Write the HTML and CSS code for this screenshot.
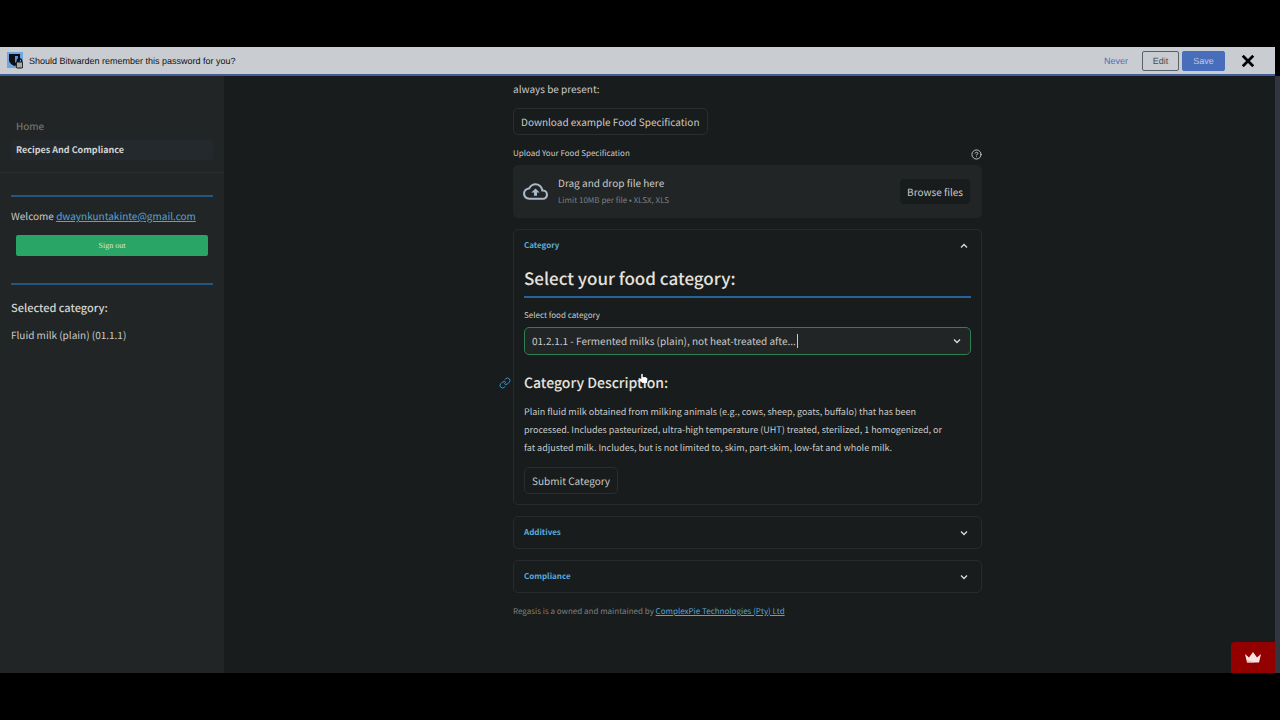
FILE: index.html
```html
<!DOCTYPE html>
<html lang="en">
<head>
<meta charset="utf-8">
<meta name="viewport" content="width=device-width, initial-scale=1">
<title>Regasis - Recipes And Compliance</title>
<link rel="stylesheet" href="styles.css">
</head>
<body>
<div class="frame">
  <header class="notice">
    <svg class="notice-logo" viewBox="0 0 16 17" aria-hidden="true">
      <rect width="16" height="16" fill="#6ea6e0"/>
      <path d="M2 2h11v6c0 3-3 5-5.500 6C4.500 13 2 10.500 2 8z" fill="#0b1018"/>
      <path d="M8 4h3v4.500L8 11z" fill="#5b91cc"/>
      <path d="M10.300 10V8.800a2.200 2.200 0 0 1 4.400 0V10" fill="none" stroke="#101010" stroke-width="1.300"/>
      <rect x="9.300" y="10" width="6.400" height="6" rx="1" fill="#a9a9a5" stroke="#111" stroke-width="1"/>
    </svg>
    <span class="notice-text">Should Bitwarden remember this password for you?</span>
    <button class="notice-link" type="button">Never</button>
    <button class="notice-btn" type="button">Edit</button>
    <button class="notice-btn notice-save" type="button">Save</button>
    <button class="notice-close" type="button" aria-label="Close">
      <svg viewBox="0 0 12 12"><path d="M1.500 1.500l9 9M10.500 1.500l-9 9" stroke="#000" stroke-width="2.400" fill="none"/></svg>
    </button>
  </header>

  <div class="app">
    <aside class="sidebar">
      <nav class="nav">
        <a class="nav-item" href="#">Home</a>
        <a class="nav-item nav-active" href="#">Recipes And Compliance</a>
      </nav>
      <div class="side-content">
        <hr class="rule">
        <p class="welcome">Welcome <a class="link" href="mailto:dwaynkuntakinte@gmail.com">dwaynkuntakinte@gmail.com</a></p>
        <button class="signout" type="button">Sign out</button>
        <hr class="rule">
        <h2 class="side-title">Selected category:</h2>
        <p class="side-text">Fluid milk (plain) (01.1.1)</p>
      </div>
    </aside>

    <main class="main">
      <div class="column">
        <p class="text">always be present:</p>
        <button class="btn download" type="button">Download example Food Specification</button>

        <div class="upload-label">
          <label for="file">Upload Your Food Specification</label>
          <svg class="help" viewBox="0 0 24 24" aria-hidden="true"><circle cx="12" cy="12" r="10"/><path d="M9.090 9a3 3 0 0 1 5.830 1c0 2-3 3-3 3M12 17h.01"/></svg>
        </div>
        <section class="dropzone">
          <svg class="cloud" viewBox="0 0 24 24" aria-hidden="true"><path d="M19.350 10.040A7.490 7.490 0 0 0 12 4C9.110 4 6.600 5.640 5.350 8.040A5.994 5.994 0 0 0 0 14c0 3.310 2.690 6 6 6h13c2.760 0 5-2.240 5-5 0-2.640-2.050-4.780-4.650-4.960zM19 18H6c-2.210 0-4-1.790-4-4 0-2.050 1.530-3.760 3.560-3.970l1.070-.110.500-.950A5.469 5.469 0 0 1 12 6c2.620 0 4.880 1.860 5.390 4.430l.300 1.500 1.530.110A2.980 2.980 0 0 1 22 15c0 1.650-1.350 3-3 3zM8 13h2.550v3h2.900v-3H16l-4-4z"/></svg>
          <div class="drop-text">
            <span class="drop-title">Drag and drop file here</span>
            <span class="drop-hint">Limit 10MB per file • XLSX, XLS</span>
          </div>
          <button class="btn browse" id="file" type="button">Browse files</button>
        </section>

        <section class="expander">
          <button class="expander-head" type="button" aria-expanded="true">Category
            <svg class="chevron" viewBox="0 0 10 10"><path d="M2 6.500l3-3 3 3"/></svg>
          </button>
          <div class="expander-body">
            <h1 class="title">Select your food category:</h1>
            <label class="select-label" for="category">Select food category</label>
            <div class="select-wrap">
              <select class="select" id="category">
                <option>01.2.1.1 - Fermented milks (plain), not heat-treated afte...</option>
              </select>
              <span class="caret"></span>
              <svg class="chevron select-chevron" viewBox="0 0 10 10"><path d="M2 3.500l3 3 3-3"/></svg>
            </div>
            <h2 class="subtitle">
              <a class="anchor" href="#description" aria-label="Link to section"><svg viewBox="0 0 24 24"><path d="M10 13a5 5 0 0 0 7.540.540l3-3a5 5 0 0 0-7.070-7.070l-1.720 1.710M14 11a5 5 0 0 0-7.540-.540l-3 3a5 5 0 0 0 7.070 7.070l1.710-1.710"/></svg></a>
              Category Description:
              <svg class="pointer" viewBox="0 0 12 14" aria-hidden="true"><path d="M3 1.500C3 .5 5 .5 5 1.500V5l5 1c1 .3 1.300 1 1.200 2l-.7 3.500V13H4.500l-4-5C0 7 1.500 6.500 3 8z" fill="#fff"/></svg>
            </h2>
            <p class="text description" id="description">Plain fluid milk obtained from milking animals (e.g., cows, sheep, goats, buffalo) that has been processed. Includes pasteurized, ultra-high temperature (UHT) treated, sterilized, 1 homogenized, or fat adjusted milk. Includes, but is not limited to, skim, part-skim, low-fat and whole milk.</p>
            <button class="btn" type="button">Submit Category</button>
          </div>
        </section>

        <section class="expander">
          <button class="expander-head" type="button" aria-expanded="false">Additives
            <svg class="chevron" viewBox="0 0 10 10"><path d="M2 3.500l3 3 3-3"/></svg>
          </button>
        </section>
        <section class="expander">
          <button class="expander-head" type="button" aria-expanded="false">Compliance
            <svg class="chevron" viewBox="0 0 10 10"><path d="M2 3.500l3 3 3-3"/></svg>
          </button>
        </section>
        <footer class="footer">Regasis is a owned and maintained by <a class="link" href="#">ComplexPie Technologies (Pty) Ltd</a></footer>
      </div>
      <button class="badge" type="button" aria-label="Streamlit">
        <svg viewBox="0 0 18 12"><path d="M1 2l4 3.500L9 0l4 5.500L17 2l-2 8.500H3z" fill="#f9e4e4"/><path d="M3 8l8 2.500H3z" fill="#eeb9b9"/></svg>
      </button>
    </main>
    <div class="scrollbar"></div>
  </div>
</div>
</body>
</html>
```
FILE: styles.css
```css
* { box-sizing: border-box; }

body {
  margin: 0;
  background: #000;
  color: #c9cac8;
  font: 10px/18px "Noto Sans CJK JP", "Noto Sans CJK SC", sans-serif;
  text-rendering: geometricPrecision;
}

h1, h2, p { margin: 0; }
button, select { font: inherit; color: inherit; text-rendering: inherit; }
svg { display: block; }

.frame {
  height: 100vh;
  padding: 47px 0;
  display: flex;
  flex-direction: column;
}

.notice {
  flex: none;
  display: flex;
  align-items: center;
  height: 29px;
  padding: 0 20px 0 7px;
  margin-right: 5px;
  background: #c9ccd1;
  border-bottom: 2px solid #3f5f96;
  color: #111;
  font: 9px/14px "Liberation Sans", Arial, sans-serif;
}
.notice-logo { width: 16px; height: 17px; margin-right: 6px; }
.notice-text { flex: 1; }
.notice-link { padding: 0; margin-right: 14px; border: 0; background: none; color: #4c70bd; }
.notice-btn {
  width: 37px;
  height: 20px;
  padding: 0;
  border: 1px solid #596068;
  border-radius: 2px;
  background: none;
  color: #4a4f57;
}
.notice-save { width: 43px; margin-left: 3px; border-color: #486dbb; background: #486dbb; color: #c3cce0; }
.notice-close { width: 14px; margin-left: 16px; padding: 0; border: 0; background: none; }
.notice-close svg { width: 14px; height: 14px; }

.app { flex: 1; min-height: 0; display: flex; background: #181c1c; }

.sidebar { flex: none; width: 224px; background: #212525; }
.nav {
  display: flex;
  flex-direction: column;
  gap: 4px;
  padding: 40px 11px 12px;
  border-bottom: 1px solid #2a2e30;
}
.nav-item {
  height: 20px;
  padding: 0 5px;
  border-radius: 3px;
  line-height: 20px;
  color: #7d8080;
  text-decoration: none;
}
.nav-active { background: #24292d; color: #d3d4d2; font-size: 9px; font-weight: 700; }
.side-content { padding: 22px 11px; }
.rule { height: 2px; margin: 0; border: 0; background: #24567f; }
.link { color: #5ba3cf; text-decoration: underline; }
.welcome { margin-top: 10px; }
.signout {
  display: block;
  width: calc(100% - 10px);
  height: 21px;
  margin: 10px 5px 27px;
  padding: 0;
  border: 0;
  border-radius: 2px;
  background: #29a566;
  color: #d6e8dc;
  font: 8px/20px "Liberation Serif", serif;
}
.side-title { margin-top: 13px; font-size: 11px; line-height: 20px; font-weight: 500; color: #d3d4d2; }
.side-text { margin-top: 8px; }

.main { position: relative; flex: 1; min-width: 0; overflow: hidden; padding: 4px 4px 0 0; }
.column { max-width: 469px; margin: 0 auto; }
.btn {
  height: 27px;
  padding: 0 7px;
  border: 1px solid #2a2e30;
  border-radius: 5px;
  background: #181c1c;
}
.download { display: block; margin-top: 10px; }
.upload-label { display: flex; justify-content: space-between; align-items: center; margin-top: 10px; font-size: 8px; }
.help { width: 11px; height: 11px; fill: none; stroke: #c9cac8; stroke-width: 2; stroke-linecap: round; }
.dropzone {
  display: flex;
  align-items: center;
  height: 53px;
  margin-top: 2px;
  padding: 0 11px 0 10px;
  border-radius: 5px;
  background: #212525;
}
.cloud { width: 25px; height: 25px; margin-right: 10px; fill: #a9b9ca; }
.drop-text { flex: 1; display: flex; flex-direction: column; }
.drop-hint { font-size: 8px; color: #7d8080; }
.browse { border-color: #212525; }

.expander { margin-top: 11px; border: 1px solid #272b2c; border-radius: 5px; }
.expander-head {
  display: flex;
  align-items: center;
  justify-content: space-between;
  width: 100%;
  height: 31px;
  padding: 0 12px 0 10px;
  border: 0;
  background: none;
  color: #5baada;
  font-size: 8px;
  font-weight: 700;
}
.chevron { width: 10px; height: 10px; fill: none; stroke: #dcdcda; stroke-width: 1.300; }
.expander-body { padding: 2px 10px 10px; }
.title {
  padding-bottom: 3px;
  border-bottom: 2px solid #23649a;
  color: #e3e2de;
  font-size: 17px;
  line-height: 30px;
  font-weight: 500;
}
.select-label { display: block; margin-top: 9px; font-size: 8px; }
.select-wrap { position: relative; margin-top: 2px; }
.select {
  display: block;
  width: 100%;
  height: 28px;
  padding: 0 7px;
  border: 1px solid #2c8052;
  border-radius: 5px;
  background: #212525;
  appearance: none;
}
.caret { position: absolute; left: 273px; top: 7px; width: 1px; height: 14px; background: #c9cac8; }
.select-chevron { position: absolute; right: 9px; top: 9px; }
.subtitle { position: relative; margin-top: 17px; color: #e3e2de; font-size: 14px; line-height: 22px; font-weight: 500; }
.anchor { position: absolute; left: -25px; top: 5px; }
.anchor svg { width: 12px; height: 12px; fill: none; stroke: #3c91c6; stroke-width: 2; stroke-linecap: round; stroke-linejoin: round; }
.pointer { position: absolute; left: 115px; top: 0; width: 9px; height: 13px; }
.description { max-width: 430px; margin: 9px 0 10px; font-size: 9px; }
.footer { margin-top: 10px; font-size: 8px; color: #7d8080; }

.badge {
  position: absolute;
  right: 0;
  bottom: 0;
  display: flex;
  align-items: center;
  justify-content: center;
  width: 44px;
  height: 31px;
  padding: 0;
  border: 0;
  border-radius: 4px 0 0 0;
  background: #930000;
}
.badge svg { width: 18px; height: 12px; }
.scrollbar { flex: none; width: 5px; background: #30353f; }
```
